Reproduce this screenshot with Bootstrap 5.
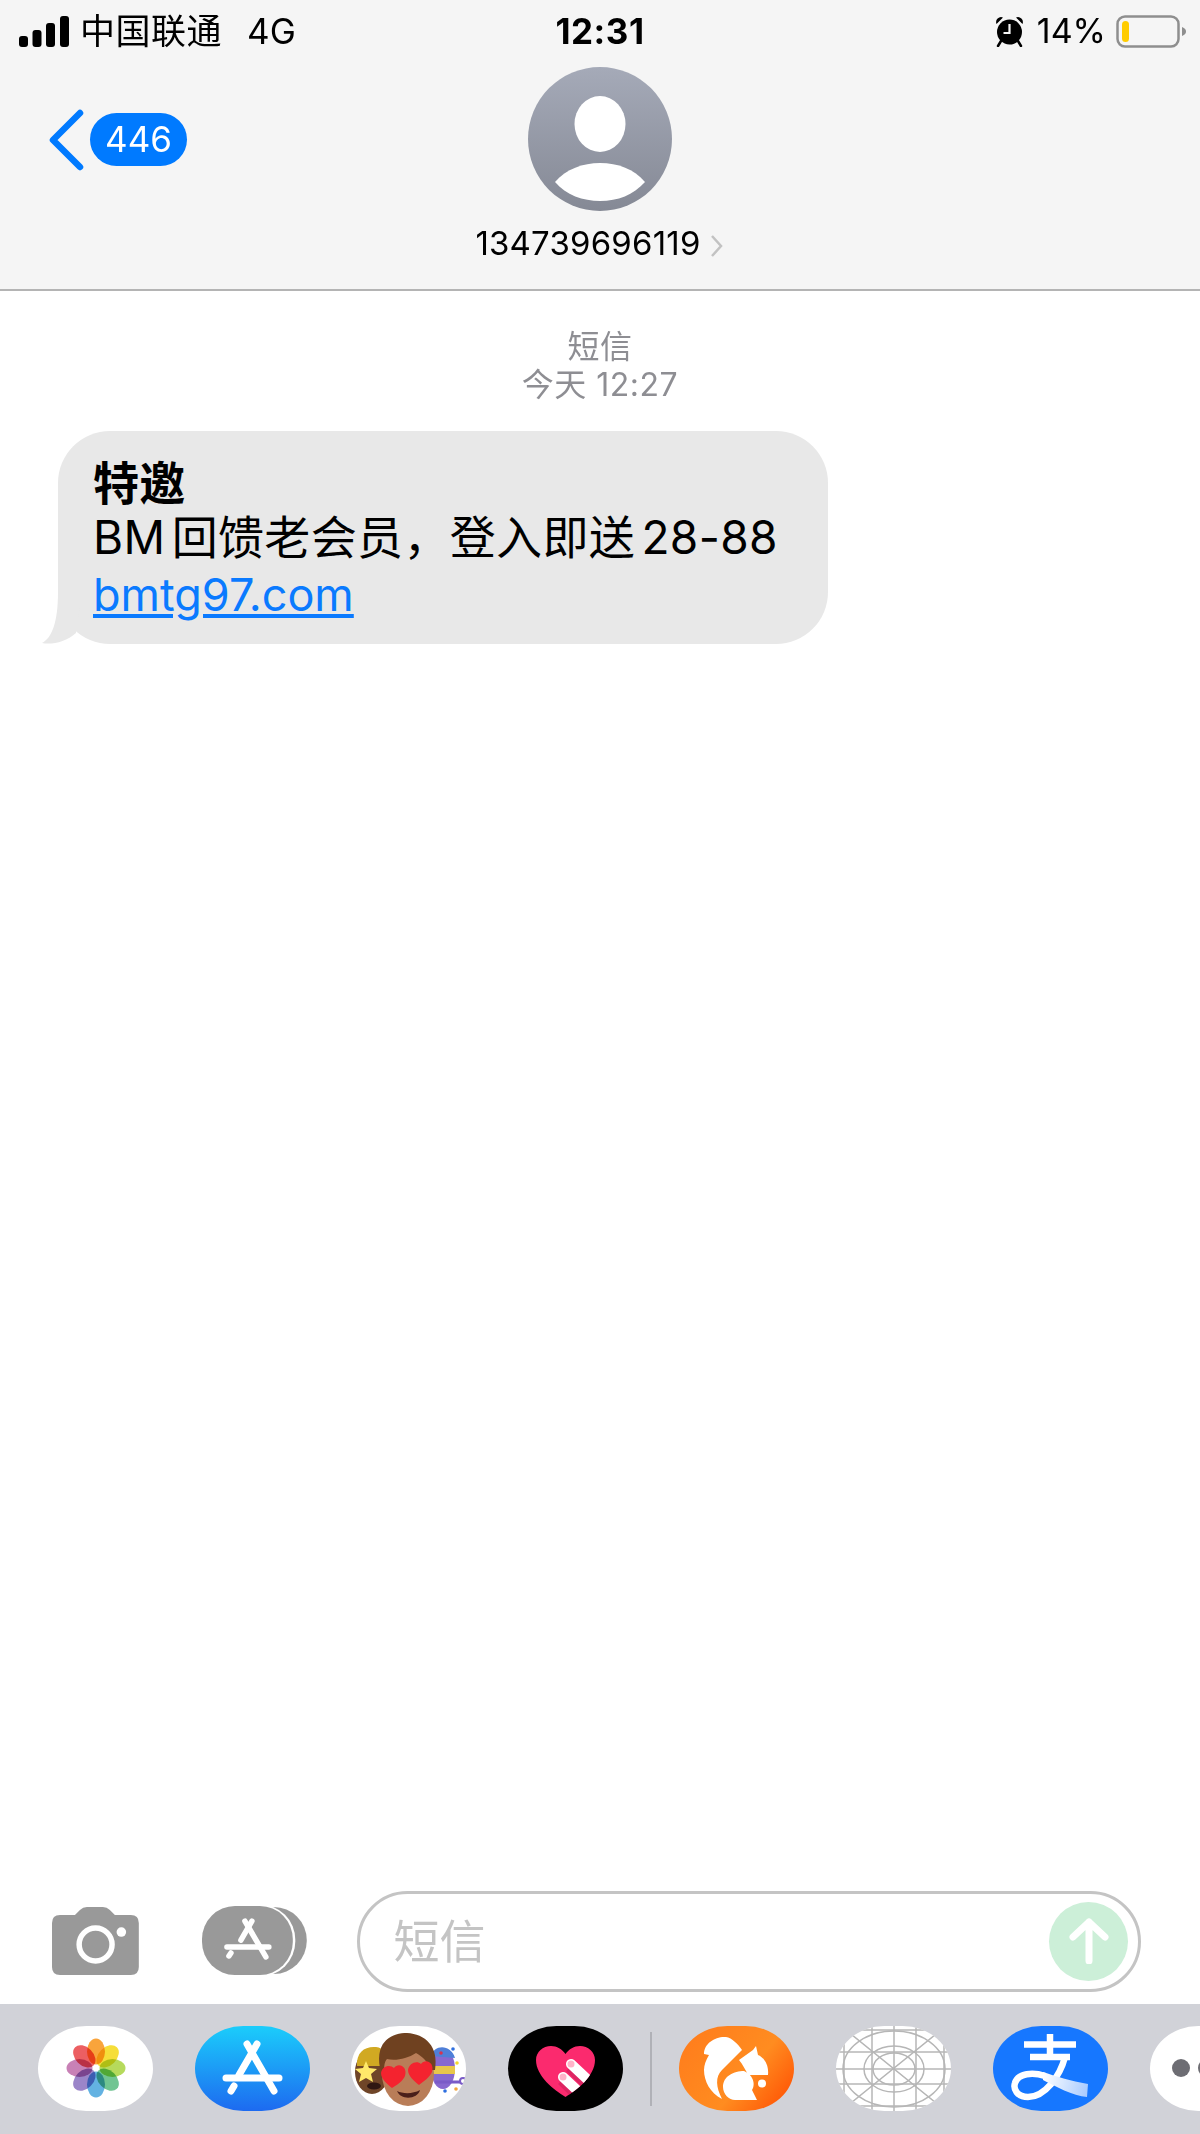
<!DOCTYPE html>
<html lang="zh-CN">
<head>
<meta charset="utf-8">
<title>短信</title>
<link href="https://cdn.jsdelivr.net/npm/bootstrap@5.3.0/dist/css/bootstrap.min.css" rel="stylesheet">
<style>
body{height:2134px;background:#fff;color:#000;font-family:Inter,"Noto Sans CJK SC",sans-serif;overflow:hidden}
.sms-head{height:291px;background:#f5f5f5;border-bottom:2px solid #b4b4b4;flex:none}
.stat-row{display:grid;grid-template-columns:1fr auto 1fr;height:46px;margin-top:8px;padding:0 14px;font-size:34px;line-height:46px}
.signal-mark{margin-left:5px}
.stat-clock{font-weight:700;font-size:35px;letter-spacing:.5px}
.carrier{margin-left:11px;font-size:35px;letter-spacing:.5px}
.net{margin-left:25px;font-size:35px}
.stat-pct{margin:0 10px 0 13px}
.head-nav{display:grid;grid-template-columns:1fr auto 1fr;padding:13px 0 0}
.nav-side{padding:42px 0 0 49px}
.count-pill{background:#007aff;color:#fff;width:97px;height:53px;border-radius:27px;font-size:35px;margin-left:6px}
.person-name{font-size:33px;line-height:44px;margin-top:10px;letter-spacing:.2px;white-space:nowrap}
.name-caret{margin:0 2px 0 9px}
.msg-area{flex:1 1 0;min-height:0;padding-top:37px}
.msg-meta{color:#8e8e93;font-size:32px;line-height:38px;letter-spacing:.5px}
.msg-bubble{position:relative;margin:27px 0 0 58px;width:770px;height:213px;padding:21px 20px 0 35px;background:#e8e8e8;border-radius:52px;font-size:46px;line-height:57px;white-space:nowrap;word-spacing:-7px;letter-spacing:.35px}
.msg-title{font-weight:700;font-family:"Noto Sans CJK SC",Inter,sans-serif}
.msg-bubble a{color:#0a7aff;font-size:45px;letter-spacing:0}
.msg-tail{position:absolute;left:-16px;bottom:0}
.compose{flex:none;height:113px;padding:0 59px 13px 52px}
.store-btn{margin-left:63px}
.compose-field{width:786px;height:101px;margin-left:49px;border:3px solid #c4c4c4;border-radius:51px;padding:0 10px 0 34px;color:#c4c4c4;font-size:46px}
.send-dot{width:79px;height:79px;border-radius:50%;background:#ccefd8}
.app-dock{flex:none;height:130px;background:#d1d2d8;padding:22px 0 0 38px;overflow:hidden}
.dock-run{gap:42px;flex:none}
.dock-run-first{gap:41.5px}
.dock-icon{display:block;flex:none;width:115px;height:85px;border-radius:42% / 50%;overflow:hidden}
.dock-white{background:#fff}
.dock-line{flex:none;width:2px;height:74px;margin:6px 27px 0;background:#b0b1b7}
.flower-petal{mix-blend-mode:multiply}
</style>
</head>
<body class="d-flex flex-column">

<header class="sms-head d-flex flex-column">
  <div class="stat-row align-items-center">
    <div class="d-flex align-items-center">
      <svg class="signal-mark" width="50" height="31" viewBox="0 0 50 31"><rect y="20" width="9" height="11" rx="3" fill="#000"/><rect x="13.500" y="14" width="9" height="17" rx="3" fill="#000"/><rect x="27" y="7" width="9" height="24" rx="3" fill="#000"/><rect x="41" y="0" width="9" height="31" rx="3" fill="#000"/></svg>
      <span class="carrier">中国联通</span><span class="net">4G</span>
    </div>
    <div class="stat-clock">12:31</div>
    <div class="d-flex align-items-center justify-content-end">
      <svg width="29" height="31" viewBox="0 0 29 31"><path d="M1.500 8 A5 5 0 0 1 8 1.500 Z M27.500 8 A5 5 0 0 0 21 1.500 Z" fill="#000"/><path d="M6 25 L3 30 M23 25 L26 30" stroke="#000" stroke-width="2.500" stroke-linecap="round"/><circle cx="14.500" cy="16" r="12.500" fill="#000"/><path d="M14.500 8 V17 H8.500" fill="none" stroke="#f5f5f5" stroke-width="2.200"/></svg>
      <span class="stat-pct">14%</span>
      <svg width="70" height="33" viewBox="0 0 70 33"><rect x="1.500" y="1.500" width="61" height="30" rx="7.500" fill="none" stroke="#8e8e8e" stroke-width="2.500"/><rect x="6" y="6" width="7" height="21" rx="3.500" fill="#ffcc00"/><path d="M66 12 C69 13 70 15 70 16.500 C70 18 69 20 66 21 Z" fill="#8e8e8e"/></svg>
    </div>
  </div>
  <div class="head-nav">
    <div class="nav-side d-flex align-items-start">
      <svg width="35" height="62" viewBox="0 0 35 62" class="flex-none"><path d="M31 4 L4 31 L31 58" fill="none" stroke="#007aff" stroke-width="6.500" stroke-linecap="round" stroke-linejoin="round"/></svg>
      <span class="count-pill d-flex align-items-center justify-content-center mt-1">446</span>
    </div>
    <div class="d-flex flex-column align-items-center">
      <svg width="144" height="144" viewBox="0 0 144 144">
        <defs><linearGradient id="avaFill" x1="0" y1="0" x2="0" y2="1"><stop offset="0" stop-color="#a5aab8"/><stop offset="1" stop-color="#858995"/></linearGradient></defs>
        <circle cx="72" cy="72" r="72" fill="url(#avaFill)"/>
        <ellipse cx="72" cy="57" rx="25.500" ry="28" fill="#fff"/>
        <path d="M27 115 C38 102 55 96 72 96 C90 96 106 102 117 115 C105 128 90 134 72 134 C55 134 38 128 27 115 Z" fill="#fff"/>
      </svg>
      <div class="person-name">134739696119<svg class="name-caret" width="13" height="24" viewBox="0 0 13 24"><path d="M2 2 L11 12 L2 22" fill="none" stroke="#c2c2c2" stroke-width="2.500"/></svg></div>
    </div>
    <div></div>
  </div>
</header>

<main class="msg-area">
  <div class="msg-meta text-center">短信<br>今天 12:27</div>
  <div class="msg-bubble">
    <svg class="msg-tail" width="40" height="52" viewBox="0 0 40 52"><path d="M16 0 C16 30 10 46 0 51 C10 53 24 50 34 41 L40 0 Z" fill="#e8e8e8"/></svg>
    <div class="msg-title">特邀</div>
    <div>BM 回馈老会员，登入即送 28-88</div>
    <div><a href="#">bmtg97.com</a></div>
  </div>
</main>

<section class="compose d-flex align-items-center">
  <svg width="87" height="69" viewBox="0 0 87 69" class="flex-none">
    <path d="M8 8 H23 L28 3 Q31 0 35 0 H51 Q55 0 58 3 L63 8 H79 Q87 8 87 16 V60 Q87 68 79 68 H8 Q0 68 0 60 V16 Q0 8 8 8 Z" fill="#999"/>
    <circle cx="43.700" cy="37.500" r="16.500" fill="none" stroke="#fff" stroke-width="5.500"/>
    <circle cx="69.500" cy="25" r="4.800" fill="#fff"/>
  </svg>
  <svg width="106" height="70" viewBox="0 0 106 70" class="store-btn flex-none">
    <rect x="13" y="1" width="92" height="67" rx="33" fill="#999"/>
    <rect x="-1.500" y="-1.500" width="95" height="72" rx="35" fill="#fff"/>
    <rect x="0" y="0" width="91" height="69" rx="33" fill="#999"/>
    <g fill="none" stroke="#fff" stroke-width="5.500" stroke-linecap="round"><path d="M43 15 L64 51"/><path d="M50 15 L39 34"/><path d="M29 47 L27 50"/><path d="M25 41 H67"/></g>
  </svg>
  <div class="compose-field d-flex align-items-center justify-content-between">
    <span>短信</span>
    <span class="send-dot d-flex align-items-center justify-content-center">
      <svg width="40" height="46" viewBox="0 0 40 46"><path d="M20 43 V4 M4 19 L20 4 L36 19" fill="none" stroke="#fff" stroke-width="7" stroke-linecap="round" stroke-linejoin="round"/></svg>
    </span>
  </div>
</section>

<nav class="app-dock d-flex">
  <div class="dock-run dock-run-first d-flex">
    <a class="dock-icon dock-white" href="#"><svg width="115" height="85" viewBox="0 0 115 85">
      <g transform="translate(58 42)">
        <ellipse class="flower-petal" cy="-16.500" rx="9" ry="13" fill="#f9a43b"/>
        <ellipse class="flower-petal" cy="-16.500" rx="9" ry="13" fill="#f6de39" transform="rotate(45)"/>
        <ellipse class="flower-petal" cy="-16.500" rx="9" ry="13" fill="#b6da5c" transform="rotate(90)"/>
        <ellipse class="flower-petal" cy="-16.500" rx="9" ry="13" fill="#71c592" transform="rotate(135)"/>
        <ellipse class="flower-petal" cy="-16.500" rx="9" ry="13" fill="#63b2e2" transform="rotate(180)"/>
        <ellipse class="flower-petal" cy="-16.500" rx="9" ry="13" fill="#9b85c9" transform="rotate(225)"/>
        <ellipse class="flower-petal" cy="-16.500" rx="9" ry="13" fill="#c881b6" transform="rotate(270)"/>
        <ellipse class="flower-petal" cy="-16.500" rx="9" ry="13" fill="#ec5f62" transform="rotate(315)"/>
        <circle r="2" fill="#fff"/>
      </g>
    </svg></a>
    <a class="dock-icon" href="#"><svg width="115" height="85" viewBox="0 0 115 85">
      <defs><linearGradient id="storeFill" x1="0" y1="0" x2="0" y2="1"><stop offset="0" stop-color="#1bcdfb"/><stop offset="1" stop-color="#1d6af0"/></linearGradient></defs>
      <rect width="115" height="85" fill="url(#storeFill)"/>
      <g fill="none" stroke="#fff" stroke-width="7" stroke-linecap="round"><path d="M52 18 L79 65"/><path d="M62 18 L44 49"/><path d="M39 60 L36 65"/><path d="M31 52 H84"/></g>
    </svg></a>
    <a class="dock-icon dock-white" href="#"><svg width="115" height="85" viewBox="0 0 115 85">
      <ellipse cx="92" cy="43" rx="12" ry="20" fill="#8768cf"/>
      <path d="M80 30 C83 18 100 18 104 32 Z" fill="#4f7fd8"/>
      <circle cx="90" cy="27" r="1.800" fill="#d8324f"/>
      <rect x="80" y="40" width="24" height="8" fill="#e8c64a"/>
      <path d="M84 56 H109" stroke="#7a5bc7" stroke-width="3"/>
      <circle cx="112" cy="55" r="3" fill="none" stroke="#7a5bc7" stroke-width="2"/>
      <circle cx="102" cy="23" r="1.800" fill="#2e6fe0"/><circle cx="106" cy="37" r="1.800" fill="#f4d92b"/><circle cx="94" cy="65" r="1.800" fill="#2e6fe0"/><circle cx="105" cy="63" r="1.800" fill="#f3a43b"/>
      <ellipse cx="21" cy="46" rx="17" ry="22" fill="#6f4528"/>
      <path d="M6 40 C5 26 14 20 25 21 C33 22 36 28 37 40 Z" fill="#d1a922"/>
      <path d="M15 35 L18 42 L26 43 L20 48 L22 56 L15 52 L8 56 L10 48 L4 43 L12 42 Z" fill="#ffe96a"/>
      <ellipse cx="23" cy="60" rx="7" ry="3.500" fill="#2f1712"/>
      <ellipse cx="57" cy="48" rx="26" ry="32" fill="#b97d58"/>
      <path d="M29 42 C24 14 42 7 56 7 C74 8 88 20 84 44 L80 44 C77 36 72 31 65 27 C56 33 44 35 36 33 C33 36 33 42 33 48 Z" fill="#6f4120"/>
      <path d="M43 42 C47 36 57 40 54 50 C52 55 46 59 41 62 C36 58 30 53 30 47 C31 40 39 38 43 42 Z" fill="#f4232f"/>
      <path d="M70 38 C74 32 84 36 81 46 C79 51 73 55 68 59 C63 55 57 50 57 44 C58 37 66 34 70 38 Z" fill="#f4232f"/>
      <path d="M46 65 C52 68 62 68 69 64 C67 73 50 75 46 65 Z" fill="#4a1f1a"/>
    </svg></a>
    <a class="dock-icon bg-black" href="#"><svg width="115" height="85" viewBox="0 0 115 85">
      <defs><clipPath id="heartClip"><path d="M57.500 71 C46 64 28 50 28 34 C28 26 35 20 43 20 C49 20 54 23 57.500 28 C61 23 66 20 72 20 C80 20 87 26 87 34 C87 50 69 64 57.500 71 Z"/></clipPath></defs>
      <g clip-path="url(#heartClip)">
        <rect width="115" height="85" fill="#fb2a6e"/>
        <path d="M62 41 L84 63 M54 54 L72 72" stroke="#b81f54" stroke-width="11" opacity=".45"/>
        <path d="M63 38 L80 54 M55 51 L71 66" stroke="#fff" stroke-width="10" stroke-linecap="round"/>
        <circle cx="63" cy="38" r="3.500" fill="#ffb3c9"/><circle cx="55" cy="51" r="3.500" fill="#ffb3c9"/>
      </g>
    </svg></a>
  </div>
  <span class="dock-line"></span>
  <div class="dock-run d-flex">
    <a class="dock-icon" href="#"><svg width="115" height="85" viewBox="0 0 115 85">
      <defs><linearGradient id="ucFill" x1="0" y1="0.200" x2="1" y2="0.800"><stop offset="0" stop-color="#ff7d1c"/><stop offset=".6" stop-color="#ff8c20"/><stop offset="1" stop-color="#ff5505"/></linearGradient></defs>
      <rect width="115" height="85" fill="url(#ucFill)"/>
      <path d="M25 28 C25 17 37 10 47 11 C53 12 59 18 63 24 L43 44 C36 51 37 61 43 73 C31 67 25 55 25 44 C25 39 27 34 30 29 Z" fill="#fff"/>
      <path d="M60 34 L74 24 L77 20 L79 29 C86 32 90 40 89 49 H69 C66 43 64 39 60 34 Z" fill="#fff"/>
      <path d="M65 45 C55 45 44 50 44 61 C44 68 50 74 56 74 H78 L73 64 C76 60 76 50 65 45 Z" fill="#fff"/>
      <circle cx="83" cy="57.500" r="4" fill="#fff"/>
    </svg></a>
    <a class="dock-icon dock-white" href="#"><svg width="115" height="85" viewBox="0 0 115 85">
      <g fill="none" stroke="#b6b6b6" stroke-width="1.500">
        <path d="M36 0 V85 M58 0 V85 M80 0 V85 M8 0 V85 M108 0 V85"/>
        <path d="M0 4 H115 M0 26 H115 M0 43 H115 M0 58 H115 M0 80 H115"/>
        <path d="M5 0 L110 85 M110 0 L5 85"/>
        <ellipse cx="58" cy="43" rx="51" ry="38"/>
        <ellipse cx="58" cy="43" rx="30" ry="23"/>
        <ellipse cx="58" cy="43" rx="21" ry="16"/>
      </g>
    </svg></a>
    <a class="dock-icon" href="#"><svg width="115" height="85" viewBox="0 0 115 85">
      <defs><linearGradient id="ribbonFill" gradientUnits="userSpaceOnUse" x1="50" y1="50" x2="95" y2="62"><stop offset="0" stop-color="#fff"/><stop offset="1" stop-color="#a9cbff"/></linearGradient></defs>
      <rect width="115" height="85" fill="#1677ff"/>
      <path d="M31 18.500 H83 M37 31 H77 M57 8 V31" fill="none" stroke="#fff" stroke-width="6.500"/>
      <path d="M72 31 C67 50 52 71 35 71 C24 71 20 63 22 57 C25 47 40 46 52 50" fill="none" stroke="#fff" stroke-width="6.500"/>
      <path d="M50 46 C62 50 78 55 95 58 L94 71 C80 70 62 60 50 54 Z" fill="url(#ribbonFill)"/>
    </svg></a>
    <a class="dock-icon dock-white" href="#"><svg width="115" height="85" viewBox="0 0 115 85">
      <circle cx="31" cy="42" r="9" fill="#6d6d73"/><circle cx="57" cy="42" r="9" fill="#6d6d73"/><circle cx="83" cy="42" r="9" fill="#6d6d73"/>
    </svg></a>
  </div>
</nav>

<script src="https://cdn.jsdelivr.net/npm/bootstrap@5.3.0/dist/js/bootstrap.bundle.min.js"></script>
</body>
</html>
